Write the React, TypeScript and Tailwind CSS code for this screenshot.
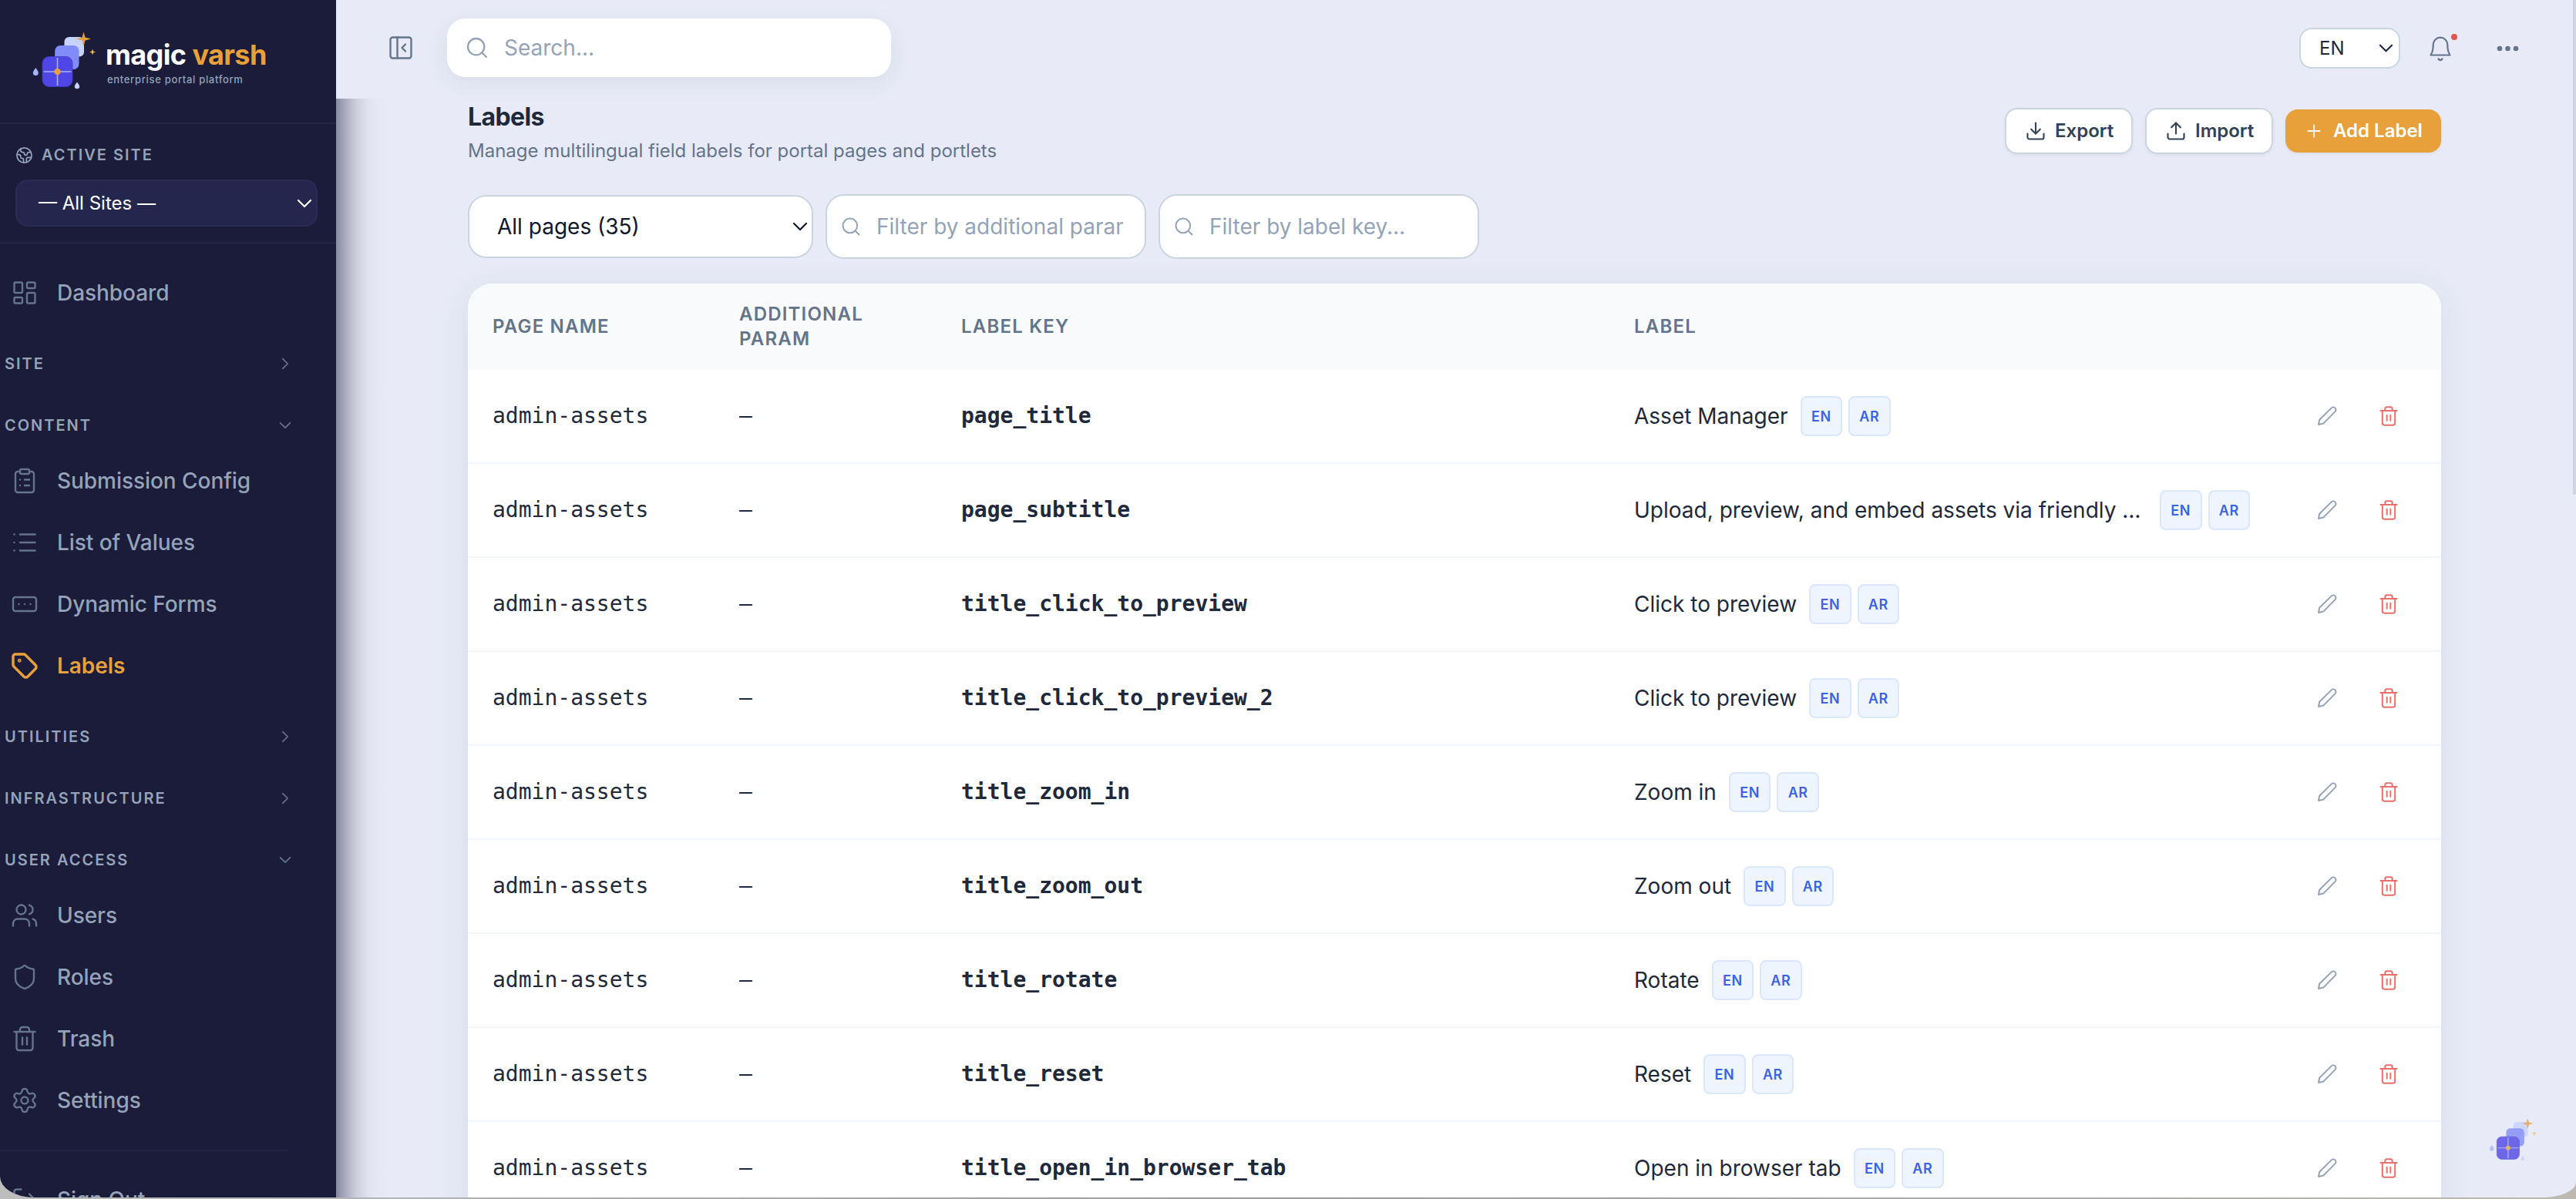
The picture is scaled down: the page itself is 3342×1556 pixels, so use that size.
import {
  ClipboardList,
  Download,
  Earth,
  LayoutDashboard,
  List,
  LogOut,
  PanelLeftClose,
  Plus,
  RectangleEllipsis,
  Search,
  Settings,
  Shield,
  Tag,
  Trash2,
  Upload,
  Users,
  type LucideIcon,
} from "lucide-react";
import clsx from "clsx";

const LABELS = [
  { key: "page_title", label: "Asset Manager" },
  {
    key: "page_subtitle",
    label: "Upload, preview, and embed assets via friendly …",
    truncated: true,
  },
  { key: "title_click_to_preview", label: "Click to preview" },
  { key: "title_click_to_preview_2", label: "Click to preview" },
  { key: "title_zoom_in", label: "Zoom in" },
  { key: "title_zoom_out", label: "Zoom out" },
  { key: "title_rotate", label: "Rotate" },
  { key: "title_reset", label: "Reset" },
  { key: "title_open_in_browser_tab", label: "Open in browser tab" },
];

function Chevron({
  className,
  direction = "down",
}: {
  className?: string;
  direction?: "down" | "right";
}) {
  return (
    <svg viewBox="0 0 20 20" fill="none" stroke="currentColor" className={className}>
      <path
        d={direction === "down" ? "M2 6l8 8 8-8" : "M6 2l8 8-8 8"}
        strokeWidth="2.2"
        strokeLinecap="round"
        strokeLinejoin="round"
      />
    </svg>
  );
}

function LogoMark({ className }: { className?: string }) {
  return (
    <svg viewBox="40 40 88 76" className={className}>
      <rect x="83.5" y="48" width="25.5" height="25.5" rx="6" fill="#c7d2fe" />
      <rect x="71.2" y="59" width="31.3" height="31" rx="7" fill="#818cf8" />
      <rect
        x="55"
        y="73.5"
        width="39"
        height="39"
        rx="8.5"
        fill="#4f46e5"
        stroke="#4338ca"
        strokeWidth="0.8"
      />
      <path d="M74.5 75v36M56.5 93h36" stroke="#a5b4fc" strokeWidth="1.6" />
      <circle cx="74.5" cy="93" r="4" fill="#e8a13a" />
      <path
        d="M108.5 41.5l2 7 7.5 2-7.5 2-2 7.5-2-7.5-7.5-2 7.5-2z"
        fill="#e8a13a"
      />
      <path d="M120 63.5l1 3 3 1-3 1-1 3-1-3-3-1 3-1z" fill="#f3bb4f" />
      <path d="M46.3 88c2 3 3.5 4.5 3.5 6.5a3.5 3.5 0 0 1-7 0c0-2 1.5-3.5 3.5-6.5z" fill="#a5b4fc" />
      <path d="M100 106.5c1.8 2.5 3.2 4 3.2 5.6a3.2 3.2 0 0 1-6.4 0c0-1.6 1.4-3.1 3.2-5.6z" fill="#c7d2fe" />
    </svg>
  );
}

function BellIcon({ className }: { className?: string }) {
  return (
    <svg viewBox="0 0 32 36" fill="none" stroke="currentColor" className={className}>
      <path
        d="M3.5 26.500h25c-2-3-2.800-5-3-9l-.2-4.500a9.300 9.300 0 0 0-18.600 0l-.2 4.500c-.2 4-1 6-3 9z"
        strokeWidth="2.2"
        strokeLinejoin="round"
      />
      <path d="M13.600 31.500c1.300 2 3.500 2 4.800 0" strokeWidth="2.4" strokeLinecap="round" />
    </svg>
  );
}

function PencilIcon({ className }: { className?: string }) {
  return (
    <svg viewBox="0 0 28 28" fill="none" stroke="currentColor" className={className}>
      <path
        d="M3 25l1.200-6.200L19.800 3.400a3.300 3.300 0 0 1 4.700 4.700L9.200 23.600z"
        strokeWidth="2"
        strokeLinejoin="round"
      />
    </svg>
  );
}

function NavItem({
  icon: Icon,
  label,
  active = false,
}: {
  icon: LucideIcon;
  label: string;
  active?: boolean;
}) {
  return (
    <a
      className={clsx(
        "flex h-20 shrink-0 items-center gap-6 pl-3.5 text-[28px]",
        active ? "font-semibold text-[#e8a13a]" : "font-medium text-[#94a3b8]"
      )}
    >
      <Icon
        size={36}
        strokeWidth={active ? 2.3 : 1.6}
        className={active ? "text-[#e8a13a]" : "text-[#64748b]"}
      />
      <span className="tracking-[-0.05px]">{label}</span>
    </a>
  );
}

function NavHeading({
  label,
  open = false,
  first = false,
}: {
  label: string;
  open?: boolean;
  first?: boolean;
}) {
  return (
    <div
      className={clsx(
        "flex h-16 shrink-0 items-center justify-between pr-[58px] pl-1.5 text-[#94a3b8]",
        first ? "mt-5" : "mt-4"
      )}
    >
      <span className="text-[20px] font-semibold tracking-[2px]">{label}</span>
      <Chevron direction={open ? "down" : "right"} className="size-4 text-[#64748b]" />
    </div>
  );
}

function Sidebar() {
  return (
    <aside className="flex w-[436px] shrink-0 flex-col overflow-hidden bg-[#1b1b3a]">
      <div className="flex h-[161px] shrink-0 border-b-2 border-[#242447] pt-10 pl-10">
        <LogoMark className="h-[76px] w-[88px]" />
        <div className="pt-[11px] pl-[9px]">
          <div className="text-[36px] leading-[40px] font-bold tracking-[-0.6px] text-white">
            magic <span className="text-[#e8a13a]">varsh</span>
          </div>
          <div className="pt-[2px] pl-[2px] text-[13px] leading-[20px] font-medium tracking-[0.68px] text-[#94a3b8]">
            enterprise portal platform
          </div>
        </div>
      </div>

      <div className="h-[155px] shrink-0 border-b-2 border-[#242447] px-5 pt-[28px]">
        <div className="flex h-6 items-center gap-3 text-[#94a3b8]">
          <Earth size={23} strokeWidth={1.8} />
          <span className="-ml-px text-[20px] font-semibold tracking-[2px]">ACTIVE SITE</span>
        </div>
        <div className="mt-5 flex h-[61px] w-[392px] items-center justify-between rounded-2xl border-2 border-[#2b2b55] bg-[#25264d] pr-[5px] pl-7 text-[24px] text-white">
          — All Sites —
          <Chevron className="size-5" />
        </div>
      </div>

      <nav className="flex flex-col pt-6">
        <NavItem icon={LayoutDashboard} label="Dashboard" />
        <NavHeading label="SITE" first />
        <NavHeading label="CONTENT" open />
        <NavItem icon={ClipboardList} label="Submission Config" />
        <NavItem icon={List} label="List of Values" />
        <NavItem icon={RectangleEllipsis} label="Dynamic Forms" />
        <NavItem icon={Tag} label="Labels" active />
        <NavHeading label="UTILITIES" first />
        <NavHeading label="INFRASTRUCTURE" />
        <NavHeading label="USER ACCESS" open />
        <NavItem icon={Users} label="Users" />
        <NavItem icon={Shield} label="Roles" />
        <NavItem icon={Trash2} label="Trash" />
        <NavItem icon={Settings} label="Settings" />
        <div className="mt-6 mb-[23px] h-0.5 w-[374px] shrink-0 bg-[#232345]" />
        <NavItem icon={LogOut} label="Sign Out" />
      </nav>
    </aside>
  );
}

function Topbar() {
  return (
    <header className="flex h-32 shrink-0 items-start justify-between pr-[73px] pl-[66px]">
      <div className="flex items-center pt-6">
        <PanelLeftClose size={36} strokeWidth={1.6} className="text-[#64748b]" />
        <div className="ml-[42px] flex h-[76px] w-[576px] items-center rounded-3xl bg-white pl-[23px] text-[28px] text-[#94a3b8] shadow-[0_8px_32px_rgba(27,27,58,0.07)]">
          <Search size={32} strokeWidth={1.7} />
          <span className="pl-[19px]">Search...</span>
        </div>
      </div>
      <div className="flex items-center pt-9">
        <div className="flex h-[53px] w-[131px] items-center justify-between rounded-2xl border-2 border-[#cbd5e1] bg-white pr-[7px] pl-6 text-[24px] text-[#1e293b]">
          EN
          <Chevron className="size-[19px]" />
        </div>
        <div className="relative ml-9 text-[#64748b]">
          <BellIcon className="h-9 w-8" />
          <span className="absolute -top-[1px] right-[-6px] size-2 rounded-full bg-[#e0524d]" />
        </div>
        <svg viewBox="0 0 30 8" className="ml-[57px] h-2 w-[30px] fill-[#64748b]">
          <circle cx="4" cy="4" r="3.3" />
          <circle cx="14.5" cy="4" r="3.3" />
          <circle cx="25" cy="4" r="3.3" />
        </svg>
      </div>
    </header>
  );
}

function OutlineButton({ icon: Icon, label }: { icon: LucideIcon; label: string }) {
  return (
    <button className="flex h-[60px] w-[166px] items-center rounded-2xl border-2 border-[#cbd5e1] bg-white pl-6 text-[24px] font-semibold text-[#334155] shadow-[0_2px_4px_rgba(27,27,58,0.06)]">
      <Icon size={28} strokeWidth={1.8} />
      <span className="pl-[11px]">{label}</span>
    </button>
  );
}

function FilterInput({ placeholder }: { placeholder: string }) {
  return (
    <div className="flex h-[84px] w-[416px] items-center rounded-3xl border-2 border-[#cbd5e1] bg-white pr-7 pl-[17px] text-[28px] text-[#94a3b8]">
      <Search size={28} strokeWidth={1.7} className="shrink-0" />
      <span className="ml-[19px] overflow-hidden whitespace-nowrap">{placeholder}</span>
    </div>
  );
}

function LangBadge({ lang }: { lang: string }) {
  return (
    <span className="flex h-[52px] w-[54.5px] items-center justify-center rounded-lg border-2 border-[#dbe7fd] bg-[#eff5ff] text-[18px] font-semibold tracking-[0.6px] text-[#3b63e6]">
      {lang}
    </span>
  );
}

function LabelsTable() {
  const columns = "grid grid-cols-[320px_288px_873px_1fr]";

  return (
    <div className="mt-8 overflow-hidden rounded-t-[32px] bg-white">
      <div
        className={clsx(
          columns,
          "h-28 items-center bg-[#f8fafc] pl-8 text-[24px] leading-8 font-semibold tracking-[1.2px] text-[#64748b]"
        )}
      >
        <span>PAGE NAME</span>
        <span className="w-40">ADDITIONAL PARAM</span>
        <span>LABEL KEY</span>
        <span>LABEL</span>
      </div>
      {LABELS.map((row) => (
        <div
          key={row.key}
          className={clsx(
            columns,
            "h-[122px] items-center border-b-2 border-[#f1f5f9] pl-8 text-[28px] text-[#1e293b]"
          )}
        >
          <span className="font-['DejaVu_Sans_Mono',monospace]">admin-assets</span>
          <span className="font-['DejaVu_Sans_Mono',monospace]">—</span>
          <span className="font-['DejaVu_Sans_Mono',monospace] font-bold">{row.key}</span>
          <div className="flex items-center gap-2">
            <span className={clsx("mr-2 whitespace-nowrap", row.truncated && "w-[666px]")}>
              {row.label}
            </span>
            <LangBadge lang="EN" />
            <LangBadge lang="AR" />
            <div className="ml-auto flex gap-[52px] pr-[54px]">
              <PencilIcon className="size-7 text-[#94a3b8]" />
              <Trash2 size={28} strokeWidth={1.7} className="text-[#e8706b]" />
            </div>
          </div>
        </div>
      ))}
    </div>
  );
}

export default function App() {
  return (
    <div className="h-[1556px] w-full overflow-hidden bg-linear-to-r from-[#bdbdbd] via-[#9b9b9b] to-[#bcb9b2] font-['Inter',sans-serif]">
      <div className="relative flex h-[1554px] overflow-hidden rounded-br-[44px_20px] rounded-bl-[44px_27px] bg-[#e8ebf7]">
        <Sidebar />
        <div className="relative flex min-w-0 flex-1 flex-col">
          <div className="absolute top-32 bottom-0 left-0 w-[72px] bg-[linear-gradient(to_right,#8888a0_0px,#b0b1c4_14px,#ced0de_27px,#dfe1ee_41px,#e6e8f5_54px,#e8ebf7_72px)]" />
          <Topbar />
          <main className="relative mr-[175px] ml-[171px] flex-1">
            <div className="flex items-start justify-between">
              <div>
                <h1 className="pt-1 text-[32px] leading-10 font-bold tracking-[-0.6px] text-[#1e293b]">
                  Labels
                </h1>
                <p className="pt-2 text-[24px] leading-8 text-[#64748b]">
                  Manage multilingual field labels for portal pages and portlets
                </p>
              </div>
              <div className="flex items-center gap-4 pt-3">
                <OutlineButton icon={Download} label="Export" />
                <OutlineButton icon={Upload} label="Import" />
                <button className="flex h-14 w-[202px] items-center rounded-2xl bg-[#e8a13a] pl-6 text-[24px] font-semibold text-white shadow-[0_2px_4px_rgba(27,27,58,0.06)]">
                  <Plus size={26} strokeWidth={1.7} />
                  <span className="pl-3">Add Label</span>
                </button>
              </div>
            </div>

            <div className="mt-10 flex items-center gap-4">
              <div className="flex h-[82px] w-[448px] items-center justify-between rounded-3xl border-2 border-[#cbd5e1] bg-white pr-[5px] pl-9 text-[28px] text-[#0f172a]">
                All pages (35)
                <Chevron className="size-5" />
              </div>
              <FilterInput placeholder="Filter by additional param..." />
              <FilterInput placeholder="Filter by label key..." />
            </div>

            <div className="rounded-t-[32px] shadow-[0_8px_48px_rgba(27,27,58,0.08)]">
              <LabelsTable />
            </div>
          </main>
        </div>
        <div className="absolute top-0 right-0 h-[642px] w-1 rounded-b bg-[#cbd5e1]" />
        <LogoMark className="absolute top-[1450px] left-[3228px] h-[57px] w-[66px] opacity-80" />
      </div>
    </div>
  );
}
